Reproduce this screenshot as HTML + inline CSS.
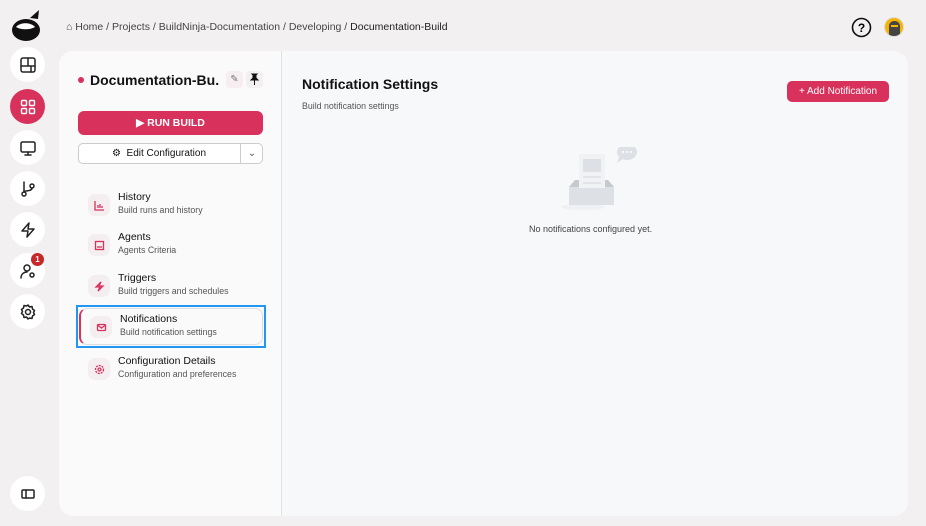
<!DOCTYPE html>
<html><head><meta charset="utf-8"><style>
*{box-sizing:border-box;margin:0;padding:0}
body{width:926px;height:526px;background:#f2f0f0;font-family:"Liberation Sans",sans-serif;position:relative;overflow:hidden;color:#111}
.sb{position:absolute;left:10px;width:35px;height:35px;border-radius:50%;background:#fff;display:flex;align-items:center;justify-content:center}
.sb svg{width:18px;height:18px;fill:none;stroke:#222;stroke-width:1.5;stroke-linecap:round;stroke-linejoin:round}
.bc{position:absolute;left:66px;top:21px;font-size:10.5px;color:#444}
.card{position:absolute;left:59px;top:51px;width:849px;height:465px;border-radius:14px;background:#f7f8fa;overflow:hidden}
.left{position:absolute;left:0;top:0;width:223px;height:465px;background:#fafafa;border-right:1px solid #e3e3e3}
.item{position:absolute;left:19px;width:187px;height:40px}
.item .ic{position:absolute;left:10px;top:7px;width:22px;height:22px;border-radius:7px;background:#f4eef0;display:flex;align-items:center;justify-content:center}
.item .t{position:absolute;left:40px;top:4px;font-size:10.5px;color:#111}
.item .s{position:absolute;left:40px;top:18px;font-size:8.8px;color:#555}
.ic svg{width:11px;height:11px;fill:none;stroke:#d8315b;stroke-width:1.3}
</style></head><body>
<svg style="position:absolute;left:11px;top:8px" width="32" height="34" viewBox="0 0 32 34"><ellipse cx="15" cy="22" rx="14" ry="11" fill="#111"/><path d="M5 19c4-5 15-5 19 0c-5 3-14 3-19 0z" fill="#fff"/><path d="M19 10l9-8l-1 9z" fill="#111"/></svg>
<div class="sb" style="top:47px"><svg viewBox="0 0 18 18"><rect x="2" y="2" width="14" height="14" rx="2"/><path d="M2 10h14M9 2v8M12 10v6"/></svg></div>
<div class="sb" style="top:89px;background:#d8315b"><svg viewBox="0 0 18 18" style="stroke:#fff;stroke-width:1.4"><rect x="2.5" y="2.5" width="5" height="5" rx="1"/><rect x="10.5" y="2.5" width="5" height="5" rx="1"/><rect x="2.5" y="10.5" width="5" height="5" rx="1"/><rect x="10.5" y="10.5" width="5" height="5" rx="1"/></svg></div>
<div class="sb" style="top:130px"><svg viewBox="0 0 18 18"><rect x="2" y="3" width="14" height="10" rx="1.5"/><path d="M9 13v3M6 16h6"/></svg></div>
<div class="sb" style="top:171px"><svg viewBox="0 0 18 18"><circle cx="5" cy="14" r="2"/><circle cx="13" cy="6" r="2"/><path d="M5 2v10M13 8c0 4-8 2-8 4"/></svg></div>
<div class="sb" style="top:212px"><svg viewBox="0 0 18 18"><path d="M10 2L3 10h6l-1 6l7-8h-6z"/></svg></div>
<div class="sb" style="top:253px"><svg viewBox="0 0 18 18"><circle cx="8" cy="6" r="3"/><path d="M2 16c0-4 3-6 6-6"/><circle cx="13" cy="13" r="2"/></svg></div>
<div style="position:absolute;left:31px;top:253px;width:13px;height:13px;border-radius:50%;background:#c62828;color:#fff;font-size:8px;font-weight:bold;text-align:center;line-height:13px">1</div>
<div class="sb" style="top:294px"><svg viewBox="0 0 18 18"><circle cx="9" cy="9" r="2.5"/><path d="M9 2l1.5 2l2.5-.5l.5 2.5l2 1.5l-1 2l1 2l-2 1.5l-.5 2.5l-2.5-.5L9 16l-1.5-2l-2.5.5l-.5-2.5l-2-1.5l1-2l-1-2l2-1.5l.5-2.5l2.5.5z"/></svg></div>
<div class="sb" style="top:476px"><svg viewBox="0 0 18 18" style="stroke-width:1.5"><rect x="3" y="5" width="12" height="8" rx="1"/><path d="M7 5v8"/></svg></div>
<div class="bc">⌂ Home / Projects / BuildNinja-Documentation / Developing / <span style="color:#222">Documentation-Build</span></div>
<svg style="position:absolute;left:851px;top:17px" width="21" height="21" viewBox="0 0 21 21"><circle cx="10.5" cy="10.5" r="9" fill="none" stroke="#111" stroke-width="1.6"/><text x="10.5" y="15" text-anchor="middle" font-size="12" font-weight="bold" font-family="Liberation Sans">?</text></svg>
<div style="position:absolute;left:884px;top:17px;width:20px;height:20px;border-radius:50%;background:#f5b400;overflow:hidden;border:1px solid #ddd"><div style="position:absolute;left:4px;top:3px;width:11px;height:17px;background:#444;border-radius:5px 5px 2px 2px"></div><div style="position:absolute;left:6px;top:7px;width:7px;height:2px;background:#f5b400"></div></div>
<div class="card">
<div class="left">
<div style="position:absolute;left:19px;top:26px;width:6px;height:6px;border-radius:50%;background:#d8315b"></div>
<div style="position:absolute;left:31px;top:21px;font-size:14px;font-weight:bold;width:130px;white-space:nowrap;overflow:hidden">Documentation-Bu...</div>
<div style="position:absolute;left:167px;top:20px;width:17px;height:17px;border-radius:4px;background:#f6eef0;font-size:10px;text-align:center;line-height:17px;color:#777">✎</div>
<div style="position:absolute;left:187px;top:20px;width:17px;height:17px;border-radius:4px;background:#f2f0f0"><svg width="17" height="17" viewBox="0 0 17 17"><path d="M6 3h5l-1 1v3l2 2H5l2-2V4z M8.5 9v5" fill="#111" stroke="#111" stroke-width="1"/></svg></div>
<div style="position:absolute;left:19px;top:60px;width:185px;height:24px;border-radius:6px;background:#d8315b;color:#fff;font-size:10.5px;font-weight:bold;text-align:center;line-height:24px">▶ RUN BUILD</div>
<div style="position:absolute;left:19px;top:92px;width:185px;height:21px;border-radius:5px;border:1px solid #ccc;background:#fff;font-size:10px;line-height:19px"><span style="position:absolute;left:33px">⚙ &nbsp;Edit Configuration</span><span style="position:absolute;left:161px;top:0;height:19px;border-left:1px solid #ccc;width:23px;text-align:center;color:#555">⌄</span></div>
<div class="item" style="top:136px"><div class="ic"><svg viewBox="0 0 11 11"><path d="M1 1v9h9M4 8V5M6 8V4M8 8V6"/></svg></div><div class="t">History</div><div class="s">Build runs and history</div></div>
<div class="item" style="top:176px"><div class="ic"><svg viewBox="0 0 11 11"><rect x="1.5" y="1.5" width="8" height="8"/><path d="M3 7h5"/></svg></div><div class="t">Agents</div><div class="s">Agents Criteria</div></div>
<div class="item" style="top:217px"><div class="ic"><svg viewBox="0 0 11 11"><path d="M7 1L2 6h4l-2 4l5-5H5z"/></svg></div><div class="t">Triggers</div><div class="s">Build triggers and schedules</div></div>
<div style="position:absolute;left:17px;top:254px;width:190px;height:43px;border:2px solid #2196f3"></div>
<div style="position:absolute;left:20px;top:257px;width:184px;height:37px;border:1px solid #ddd;border-left:2px solid #d8315b;border-radius:8px;background:#fafafa"></div>
<div class="item" style="top:258px;left:21px"><div class="ic"><svg viewBox="0 0 11 11"><rect x="1.5" y="2.5" width="8" height="6" rx="1"/><path d="M1.5 3l4 3l4-3"/></svg></div><div class="t">Notifications</div><div class="s">Build notification settings</div></div>
<div class="item" style="top:300px"><div class="ic"><svg viewBox="0 0 11 11"><circle cx="5.5" cy="5.5" r="1.5"/><circle cx="5.5" cy="5.5" r="4" stroke-dasharray="2 1"/></svg></div><div class="t">Configuration Details</div><div class="s">Configuration and preferences</div></div>
</div>
<div style="position:absolute;left:243px;top:25px;font-size:14px;font-weight:bold">Notification Settings</div>
<div style="position:absolute;left:243px;top:50px;font-size:8.8px;color:#555">Build notification settings</div>
<div style="position:absolute;left:728px;top:30px;width:102px;height:21px;border-radius:5px;background:#d8315b;color:#fff;font-size:10px;text-align:center;line-height:21px">+ Add Notification</div>
<svg style="position:absolute;left:502px;top:96px" width="80" height="70" viewBox="0 0 80 70"><ellipse cx="22" cy="60" rx="22" ry="3" fill="#eef0f3"/><path d="M8 40h45v18H8z" fill="#dde0e5"/><path d="M8 40l6-7h33l6 7z" fill="#c5cad1"/><rect x="18" y="7" width="26" height="35" fill="#f1f2f4"/><rect x="22" y="12" width="18" height="13" fill="#dde0e5"/><path d="M22 30h18M22 36h18" stroke="#dde0e5" stroke-width="1.5"/><path d="M14 41h33v6H14z" fill="#dde0e5"/><ellipse cx="66" cy="5" rx="10" ry="8" fill="#dde0e5"/><path d="M58 10l-2 6l6-4z" fill="#dde0e5"/><circle cx="62" cy="5" r="1" fill="#fff"/><circle cx="66" cy="5" r="1" fill="#fff"/><circle cx="70" cy="5" r="1" fill="#fff"/></svg>
<div style="position:absolute;left:470px;top:173px;font-size:9px;color:#444">No notifications configured yet.</div>
</div>
</body></html>
